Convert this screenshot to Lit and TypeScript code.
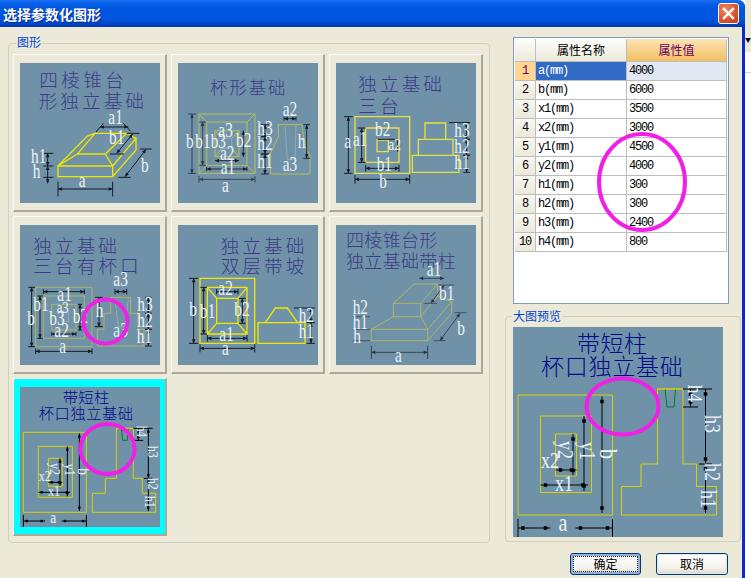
import { LitElement, html, css, svg } from "lit";
import { customElement } from "lit/decorators.js";

const line = (x1: number, y1: number, x2: number, y2: number, c: string, w: number) =>
  svg`<line x1=${x1} y1=${y1} x2=${x2} y2=${y2} stroke=${c} stroke-width=${w} />`;

const D = (x1: number, y1: number, x2: number, y2: number, t = 10, c = "#161a22", w = 3) => {
  const l = Math.hypot(x2 - x1, y2 - y1);
  const u = [(x2 - x1) / l, (y2 - y1) / l];
  const n = [-u[1], u[0]];
  const a = 12;
  const h = 5.5;
  const tri = (px: number, py: number, s: number) =>
    `${px},${py} ${px + s * u[0] * a + n[0] * h},${py + s * u[1] * a + n[1] * h} ${px + s * u[0] * a - n[0] * h},${py + s * u[1] * a - n[1] * h}`;
  return svg`${line(x1, y1, x2, y2, c, w)}
    <polygon points=${tri(x1, y1, 1)} fill=${c} /><polygon points=${tri(x2, y2, -1)} fill=${c} />
    ${t ? line(x1 - n[0] * t, y1 - n[1] * t, x1 + n[0] * t, y1 + n[1] * t, c, w) : ""}
    ${t ? line(x2 - n[0] * t, y2 - n[1] * t, x2 + n[0] * t, y2 + n[1] * t, c, w) : ""}`;
};

const P = (d: string, c: string, w: number) =>
  svg`<path d=${d} fill="none" stroke=${c} stroke-width=${w} stroke-linejoin="miter" />`;

const L = (x: number, y: number, s: string, size = 46) =>
  svg`<text class="lbl" font-size=${size} transform="translate(${x} ${y}) scale(1 1.3)">${s}</text>`;

const Ti = (x: number, y: number, s: string, pitch: number, size = 52, cls = "ttl") =>
  svg`<text class=${cls} x=${x} y=${y} font-size=${size} letter-spacing=${pitch - size}>${s}</text>`;

const R = (x: number, y: number, s: string, size = 42) =>
  svg`<text class="lbl" font-size=${size} transform="translate(${x} ${y}) rotate(90) scale(1 1.25)">${s}</text>`;

const Y = "#f2e600";
const O = "#b9bc52";
const G = "#d8d000";

const pyramid = svg`
  ${Ti(118, 262, "四棱锥台", 66, 56)}${Ti(116, 324, "形独立基础", 65, 56)}
  ${P("M174 498H338V530H174ZM338 530L408 450V415L338 498M174 498L262 408L285 400H380L408 415M285 400L232 462H316L380 400M232 462L174 498M316 462L338 498", Y, 4)}
  ${D(174, 567, 338, 567, 22)}${D(375, 530, 438, 448, 0)}
  ${line(355, 532, 392, 532, "#161a22", 3)}${line(420, 447, 455, 447, "#161a22", 3)}
  ${D(300, 381, 385, 381, 0)}${line(288, 396, 310, 370, "#161a22", 3)}${line(370, 370, 392, 394, "#161a22", 3)}
  ${D(350, 460, 398, 402, 0)}${line(330, 462, 372, 462, "#161a22", 3)}${line(380, 400, 418, 400, "#161a22", 3)}
  ${D(143, 460, 143, 498, 0)}${D(143, 498, 143, 550, 0)}
  ${line(130, 460, 160, 460, "#161a22", 3)}${line(130, 498, 160, 498, "#161a22", 3)}${line(130, 532, 160, 532, "#161a22", 3)}
  ${L(236, 561, "a")}${L(423, 515, "b")}${L(325, 372, "a1")}${L(327, 433, "b1")}${L(93, 490, "h1")}${L(98, 533, "h")}
`;

const cup = svg`
  ${Ti(630, 283, "杯形基础", 58, 52)}
  ${P("M597 342H765V520H597ZM620 366H741V496H620ZM645 392H717V470H645ZM597 342L620 366M765 342L741 366M597 520L620 496M765 520L741 496M645 392L665 415M717 392L695 415M645 470L665 445M717 470L695 445", O, 3)}
  ${P("M665 415H695V445H665ZM855 378L862 478H885L888 378", "#8fb5b0", 2.5)}
  ${P("M835 374H905L917 445L930 465V522H812V460L835 410Z", O, 3)}
  ${D(576, 342, 576, 520, 12, "#2b3440", 2.5)}${D(608, 366, 608, 496, 10, "#2b3440", 2.5)}
  ${D(597, 538, 765, 538, 10, "#3a4552", 3)}${D(620, 507, 741, 507, 6, "#161a22", 2.5)}
  ${D(645, 482, 717, 482, 0, "#161a22", 2.5)}${D(730, 392, 730, 470, 0, "#161a22", 2.5)}
  ${D(852, 356, 888, 356, 6, "#161a22", 2.5)}${D(920, 374, 920, 475, 10, "#161a22", 2.5)}
  ${D(795, 374, 795, 410, 12, "#161a22", 2.5)}${D(795, 410, 795, 462, 12, "#161a22", 2.5)}${D(795, 462, 795, 522, 12, "#161a22", 2.5)}
  ${L(558, 445, "b")}${L(586, 445, "b1")}${L(632, 443, "b3")}${L(655, 412, "a3")}${L(708, 440, "b2")}${L(660, 480, "a2")}${L(662, 522, "a1")}${L(666, 575, "a")}
  ${L(772, 405, "h3")}${L(772, 450, "h2")}${L(772, 505, "h1")}${L(893, 445, "h")}${L(848, 347, "a2")}${L(848, 512, "a3")}
`;

const threeStep = svg`
  ${Ti(100, 272, "独立基础", 65, 56)}${Ti(100, 338, "三台", 65, 56)}
  ${P("M90 350H254V520H90ZM122 384H222V487H122ZM156 420H190V455H156ZM262 466H402V517H262ZM280 418H384V466H280ZM300 369H362V418H300Z", "#e8e040", 4)}
  ${D(70, 350, 70, 520, 13)}${D(110, 384, 110, 487, 12)}${D(90, 538, 254, 538, 13)}${D(122, 505, 222, 505, 10)}
  ${line(372, 368, 435, 368, "#161a22", 3)}${D(425, 368, 425, 418, 10)}${D(425, 418, 425, 466, 10)}${D(425, 466, 425, 517, 10)}
  ${line(158, 418, 218, 418, "#161a22", 3)}${line(218, 418, 218, 455, "#161a22", 3)}
  ${L(58, 445, "a")}${L(84, 437, "a1")}${L(150, 408, "b2")}${L(190, 450, "a2", 40)}${L(155, 512, "b1")}${L(163, 563, "b")}
  ${L(388, 410, "h3")}${L(388, 458, "h2")}${L(388, 508, "h1")}
`;

const threeCup = svg`
  ${Ti(100, 128, "独立基础", 65, 56)}${Ti(100, 190, "三台有杯口", 65, 56)}
  ${P("M107 232H276V410H107ZM130 258H253V385H130ZM155 283H228V360H155ZM332 262H392V310H414V358H432V408H292V358H312V310H332Z", O, 2.5)}
  ${P("M345 268L355 350H375L385 268M185 305H205V335H185Z", "#8fb5b0", 2.5)}
  ${D(95, 232, 95, 410, 10)}${D(120, 258, 120, 385, 8)}${D(107, 424, 276, 424, 8)}${D(130, 245, 253, 245, 7)}
  ${D(155, 372, 228, 372, 5)}${D(240, 283, 240, 360, 6)}${D(345, 245, 380, 245, 8)}${D(297, 262, 297, 350, 12)}
  ${D(445, 262, 445, 310, 10)}${D(445, 310, 445, 358, 10)}${D(445, 358, 445, 408, 10)}
  ${L(82, 345, "b")}${L(100, 302, "b1")}${L(172, 272, "a1")}${L(170, 310, "a3", 38)}${L(148, 345, "b3")}${L(218, 340, "b2")}${L(163, 382, "a2")}${L(178, 428, "a")}
  ${L(340, 228, "a3")}${L(287, 322, "h")}${L(340, 382, "a3")}${L(412, 302, "h3")}${L(412, 350, "h2")}${L(410, 398, "h1")}
`;

const twoSlope = svg`
  ${Ti(662, 128, "独立基础", 65, 56)}${Ti(662, 190, "双层带坡", 65, 56)}
  ${P("M600 205H764V400H600ZM622 232H741V372H622ZM650 265H714V340H650ZM622 232L650 265M741 232L714 265M622 372L650 340M741 372L714 340M774 338H915V400H774ZM796 338L826 294H862L893 338", Y, 4)}
  ${D(581, 205, 581, 400, 14)}${D(611, 232, 611, 372, 10)}${D(600, 415, 764, 415, 12)}${D(622, 385, 741, 385, 10)}
  ${D(650, 245, 714, 245, 8)}${D(727, 265, 727, 340, 10)}
  ${line(882, 294, 945, 294, "#161a22", 3)}${line(920, 338, 945, 338, "#161a22", 3)}${line(920, 400, 945, 400, "#161a22", 3)}
  ${D(933, 294, 933, 338, 0)}${D(933, 338, 933, 400, 0)}
  ${L(568, 318, "b")}${L(600, 323, "b1")}${L(655, 255, "a2")}${L(703, 318, "b2")}${L(658, 392, "a1")}${L(666, 435, "a")}${L(896, 335, "h2")}${L(896, 385, "h1")}
`;

const column = svg`
  ${Ti(63, 112, "四棱锥台形", 55, 54)}${Ti(63, 175, "独立基础带柱", 55, 54)}
  ${P("M139 358H308V392H139ZM308 392L380 310V275L338 258M308 358L380 275M139 358L205 320M287 320L308 358M205 280H287V320H205ZM287 320L338 258V222L287 280M205 280L268 222H338", O, 2.5)}
  ${D(139, 427, 308, 427, 20, "#2b3440", 2.5)}${D(345, 392, 405, 310, 0, "#2b3440", 2.5)}
  ${line(325, 392, 362, 392, "#2b3440", 2)}${line(388, 308, 424, 308, "#2b3440", 2)}
  ${D(283, 205, 357, 205, 0, "#2b3440", 2.5)}${D(318, 280, 357, 225, 0, "#2b3440", 2.5)}
  ${line(340, 225, 388, 225, "#2b3440", 2)}${line(298, 280, 336, 280, "#2b3440", 2)}
  ${line(83, 320, 135, 320, "#2b3440", 2)}${line(83, 358, 135, 358, "#2b3440", 2)}${line(83, 392, 135, 392, "#2b3440", 2)}
  ${L(210, 457, "a")}${L(397, 375, "b")}${L(305, 197, "a1")}${L(342, 270, "b1")}${L(83, 312, "h2")}${L(83, 358, "h1")}${L(85, 398, "h")}
`;

const S = (x1: number, y1: number, x2: number, y2: number, w: number) => {
  const dot = (x: number, y: number) => svg`<rect x=${x - 3.5} y=${y - 3.5} width="7" height="7" fill="#000" />`;
  const dx = x2 === x1 ? 0 : 10;
  const dy = y2 === y1 ? 0 : 10;
  return svg`${line(x1, y1, x2, y2, "#000", w)}${dot(x1 + dx, y1 + dy)}${dot(x2 - dx, y2 - dy)}`;
};

const shortColumn = (w: number) => svg`
  ${Ti(188, 85, "带短柱", 47, 46, "ttl dark")}${Ti(116, 132, "杯口独立基础", 47.5, 46, "ttl dark")}
  ${P("M70 172H259V412H70ZM115 214H217V367H115ZM145 250H187V334H145ZM349 160V310H316V355H277V412H467V355H427V310H400V160Z", G, w)}
  ${P("M364 160L368 196H382L385 160", "#008020", w)}
  ${line(349, 160, 400, 160, G, w)}
  ${line(400, 160, 458, 160, "#000", w)}${line(400, 196, 430, 196, "#000", w)}
  ${line(70, 420, 70, 456, "#000", w)}${line(259, 420, 259, 456, "#000", w)}
  ${S(70, 438, 135, 438, w)}${S(185, 438, 259, 438, w)}
  ${S(238, 175, 238, 408, w)}${S(202, 214, 202, 364, w)}${S(180, 250, 180, 333, w)}
  ${S(115, 352, 210, 352, w)}${S(145, 322, 187, 322, w)}
  ${S(445, 160, 445, 310, w)}${S(415, 160, 415, 196, w)}${S(445, 310, 445, 408, w)}
  ${line(432, 310, 458, 310, "#000", w)}
  ${L(151, 443, "a", 40)}${L(116, 318, "x2", 36)}${L(144, 363, "x1", 36)}
  ${R(233, 280, "b", 40)}${R(194, 266, "y1", 36)}${R(150, 264, "y2", 36)}
  ${R(410, 152, "h4", 34)}${R(444, 212, "h3", 36)}${R(444, 308, "h2", 36)}${R(436, 362, "h1", 36)}
`;

const pictures = [pyramid, cup, threeStep, threeCup, twoSlope, column, shortColumn(3)];
const origins = [
  [60, 189],
  [534, 189],
  [33, 189],
  [60, 45],
  [534, 45],
  [33, 45],
  [60, 36],
];

const rows = [
  ["a(mm)", "4000"],
  ["b(mm)", "6000"],
  ["x1(mm)", "3500"],
  ["x2(mm)", "3000"],
  ["y1(mm)", "4500"],
  ["y2(mm)", "4000"],
  ["h1(mm)", "300"],
  ["h2(mm)", "300"],
  ["h3(mm)", "2400"],
  ["h4(mm)", "800"],
];

@customElement("app-root")
export class AppRoot extends LitElement {
  static styles = css`
    :host {
      display: flex;
      position: relative;
      width: 751px;
      height: 578px;
      overflow: hidden;
      background: #fff;
      font-family: "Noto Sans CJK SC", "Liberation Sans", sans-serif;
    }
    .window {
      width: 745px;
      height: 578px;
      box-sizing: border-box;
      border-right: 3px solid #0a2bd0;
      border-top-right-radius: 7px;
      background: #ece9d8;
      display: flex;
      flex-direction: column;
      flex: none;
    }
    .outside {
      flex: 1;
      display: flex;
      flex-direction: column;
    }
    .outside .strip {
      height: 52px;
      background: #ece9d8;
      color: #000;
      font-size: 6px;
      line-height: 8px;
      padding-top: 36px;
      box-sizing: border-box;
      overflow: hidden;
    }
    .outside .rule {
      margin-top: 20px;
      height: 1px;
      background: #c8d0e0;
    }
    .title {
      height: 27px;
      flex: none;
      margin-right: -3px;
      border-top-right-radius: 7px;
      background: linear-gradient(180deg, #1a6ef2 0, #0a63ea 3px, #0056e0 8px, #0054dc 20px, #0044c4 24px, #0038ac 27px);
      display: flex;
      align-items: center;
      justify-content: space-between;
      padding: 0 6px 0 3px;
      color: #fff;
      font-size: 14px;
      font-weight: 700;
      text-shadow: 1px 1px 0 #0a2a8a;
    }
    .close {
      width: 21px;
      height: 21px;
      box-sizing: border-box;
      border: 1px solid #fff;
      border-radius: 3px;
      background: radial-gradient(circle at 35% 30%, #ee8a68, #dc5530 55%, #c23a1a);
      display: flex;
      align-items: center;
      justify-content: center;
    }
    .main {
      display: flex;
      gap: 15px;
      padding-left: 8px;
      height: 516px;
      flex: none;
    }
    .group {
      position: relative;
      box-sizing: border-box;
      border: 1px solid #d0d0bf;
      border-radius: 4px;
    }
    .legend {
      position: absolute;
      background: #ece9d8;
      color: #0046d5;
      font-size: 12px;
      line-height: 14px;
      padding: 0 1px;
    }
    .shapes {
      width: 482px;
      height: 500px;
      margin-top: 16px;
      padding: 10px 0 0 4px;
    }
    .shapes .legend {
      left: 7px;
      top: -9px;
    }
    .grid {
      display: grid;
      grid-template-columns: repeat(3, 154px);
      grid-auto-rows: 158px;
      gap: 4px;
    }
    .tile {
      box-sizing: border-box;
      border: 1px solid;
      border-color: #fff #aca899 #aca899 #fff;
      border-width: 1px 2px 2px 1px;
      display: flex;
      align-items: center;
      justify-content: center;
    }
    .tile.sel {
      background: #00ffff;
    }
    .pic {
      display: block;
      width: 140px;
      height: 140px;
      background: #7092a9;
    }
    .pic.big {
      width: 210px;
      height: 210px;
    }
    .right {
      width: 236px;
      display: flex;
      flex-direction: column;
    }
    .table {
      margin: 10px 0 0 8px;
      width: 216px;
      height: 267px;
      box-sizing: border-box;
      border: 1px solid #7f9db9;
      padding: 1px;
      background: #fff;
      display: grid;
      grid-template-columns: 21px 91px 100px;
      grid-auto-rows: 19px;
      grid-template-rows: 23px;
      align-content: start;
    }
    .cell {
      box-sizing: border-box;
      border-right: 1px solid #bdbdbd;
      border-bottom: 1px solid #bdbdbd;
      font-family: "Liberation Mono", "Noto Sans CJK SC", monospace;
      font-size: 12px;
      letter-spacing: -1.2px;
      line-height: 18px;
      padding-left: 2px;
      color: #000;
      white-space: nowrap;
    }
    .hd {
      background: linear-gradient(180deg, #fdfdfb, #ece9d8);
      font-family: "Noto Sans CJK SC", sans-serif;
      font-size: 12px;
      letter-spacing: 0;
      line-height: 22px;
      text-align: center;
      padding: 0;
    }
    .hd.on {
      background: linear-gradient(180deg, #fbe3b4, #f4bf62);
      color: #660066;
    }
    .no {
      background: linear-gradient(180deg, #f8f7f2, #ece9d8);
      text-align: center;
      padding: 0;
    }
    .no.on {
      background: #ffd591;
      color: #660066;
    }
    .cell.sel {
      background: #316ac5;
      color: #fff;
    }
    .cell.val {
      background: #e0e8f4;
    }
    .preview {
      margin-top: 12px;
      width: 236px;
      height: 226px;
      padding: 10px 0 0 7px;
    }
    .preview .legend {
      left: 6px;
      top: -8px;
    }
    .footer {
      display: flex;
      justify-content: flex-end;
      gap: 15px;
      padding: 10px 14px 0 0;
    }
    .btn {
      box-sizing: border-box;
      width: 72px;
      height: 22px;
      border: 1px solid #003c74;
      border-radius: 3px;
      background: linear-gradient(180deg, #fff, #f3f2ec 70%, #dcd8c8);
      font-family: "Noto Sans CJK SC", sans-serif;
      font-size: 12px;
      line-height: 18px;
      padding: 0;
      color: #000;
      box-shadow: inset 0 0 0 1px #dfe6f0;
    }
    .btn.def {
      width: 71px;
      box-shadow: inset 0 0 0 2px #8fb0dc;
      outline: 1px dotted #222;
      outline-offset: -4px;
    }
    .marks {
      position: absolute;
      inset: 0;
      width: 751px;
      height: 578px;
      pointer-events: none;
    }
    .marks ellipse {
      fill: none;
      stroke: #f020e6;
      stroke-width: 4;
    }
    .ttl {
      font-family: "Noto Sans CJK SC", sans-serif;
      font-weight: 300;
      fill: #3a3a86;
    }
    .ttl.dark {
      fill: #000a8c;
    }
    .lbl {
      font-family: "Liberation Serif", serif;
      fill: #edf2f6;
    }
  `;

  private picture(i: number) {
    const [x, y] = origins[i];
    return html`<svg class="pic" viewBox="${x} ${y} 420 420">${pictures[i]}</svg>`;
  }

  render() {
    return html`
      <div class="window">
        <div class="title">
          <span>选择参数化图形</span>
          <div class="close">
            <svg width="13" height="13" viewBox="0 0 13 13">
              <path d="M2 2L11 11M11 2L2 11" stroke="#fff" stroke-width="2.4" stroke-linecap="square" />
            </svg>
          </div>
        </div>
        <div class="main">
          <div class="group shapes">
            <span class="legend">图形</span>
            <div class="grid">
              ${pictures.map(
                (_, i) => html`<div class="tile ${i === 6 ? "sel" : ""}">${this.picture(i)}</div>`
              )}
            </div>
          </div>
          <div class="right">
            <div class="table">
              <div class="cell hd"></div>
              <div class="cell hd">属性名称</div>
              <div class="cell hd on">属性值</div>
              ${rows.map(
                (r, i) => html`
                  <div class="cell no ${i === 0 ? "on" : ""}">${i + 1}</div>
                  <div class="cell ${i === 0 ? "sel" : ""}">${r[0]}</div>
                  <div class="cell ${i === 0 ? "val" : ""}">${r[1]}</div>
                `
              )}
            </div>
            <div class="group preview">
              <span class="legend">大图预览</span>
              <svg class="pic big" viewBox="60 36 420 420">${shortColumn(2)}</svg>
            </div>
          </div>
        </div>
        <div class="footer">
          <button class="btn def">确定</button>
          <button class="btn">取消</button>
        </div>
      </div>
      <div class="outside">
        <div class="strip">▼</div>
        <div class="rule"></div>
      </div>
      <svg class="marks" viewBox="0 0 751 578">
        <ellipse cx="642" cy="182" rx="43" ry="48" />
        <ellipse cx="105.5" cy="321.5" rx="22" ry="22" />
        <ellipse cx="107.5" cy="449" rx="27" ry="25" />
        <ellipse cx="622.5" cy="406.5" rx="36" ry="28" />
      </svg>
    `;
  }
}
